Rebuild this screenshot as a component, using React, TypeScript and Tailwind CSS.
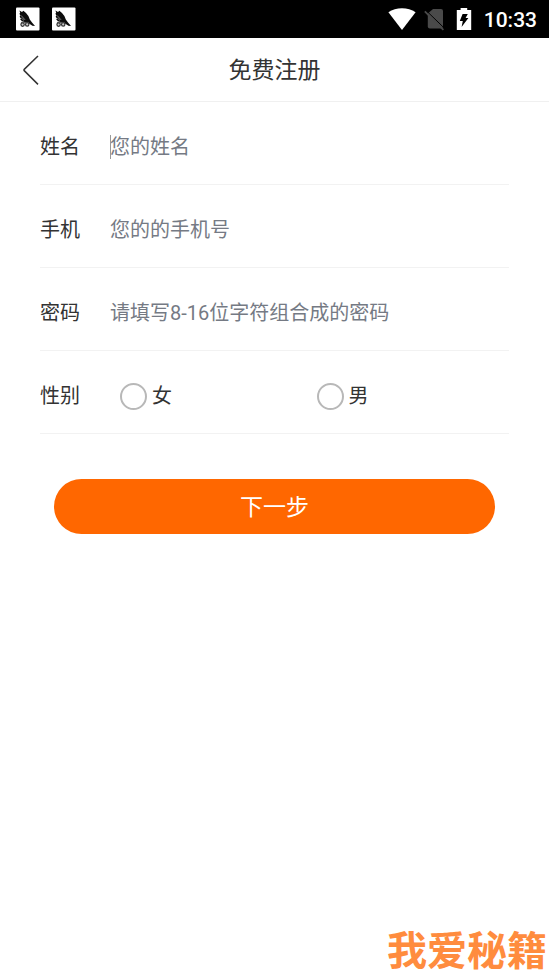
import { useState } from "react";
import type { ReactNode } from "react";

function AppBadge() {
  return (
    <svg viewBox="0 0 24 24" className="size-6" aria-hidden="true">
      <rect x="0" y="0.5" width="23.5" height="23" rx="1" fill="#fff" />
      <path
        d="M3.4 3.4 L6 5 L7.4 3.8 L10 6 L12.4 9 L13.8 12.4 L16 15.4 L19 19 L16.4 18.8 L13 16.6 L9.4 15.2 L6 14.2 L4.2 12.6 L5 11.4 L3.6 9.8 L4.4 8.6 L3.4 6.8 L4.2 5.8 Z"
        fill="#0c0c0c"
      />
      <path d="M5 8.4 L9 12.8 M5.2 11 L8 13.4" stroke="#aaa" strokeWidth="0.7" />
      <circle cx="6.6" cy="17.6" r="1.7" fill="#ccc" stroke="#333" strokeWidth="1.2" />
      <circle cx="11.2" cy="17.4" r="1.7" fill="#ccc" stroke="#333" strokeWidth="1.2" />
      <path d="M5 15.4 H13" stroke="#444" strokeWidth="0.9" />
    </svg>
  );
}

function StatusBar() {
  return (
    <div className="flex h-[38px] items-center justify-between bg-black pl-4 pr-3 text-white">
      <div className="flex gap-3">
        <AppBadge />
        <AppBadge />
      </div>
      <div className="flex items-center">
        <svg viewBox="0 0 28 24" className="h-6 w-7" aria-hidden="true">
          <path d="M14 23 L0.4 5.2 C4.2 2.6 9 1.2 14 1.2 C19 1.2 23.8 2.6 27.6 5.2 Z" fill="#fff" />
        </svg>
        <svg viewBox="0 0 22 24" className="ml-2 h-6 w-[22px]" aria-hidden="true">
          <path d="M9 2 H17 Q19 2 19 4 V19.6 Q19 21.6 17 21.6 H5.8 Q3.8 21.6 3.8 19.6 V6.6 Z" fill="#4a4a4a" />
          <path d="M2.4 3.8 L20.8 21.6" stroke="#000" strokeWidth="1" />
          <path d="M0.8 4.4 L19.4 22.8" stroke="#4a4a4a" strokeWidth="1.8" />
        </svg>
        <svg viewBox="0 0 16 24" className="ml-[10px] h-6 w-4" aria-hidden="true">
          <path d="M4.6 1 H11.2 V3 H15.2 V23 H0.8 V3 H4.6 Z" fill="#fff" />
          <path d="M6.6 7 H11.8 L9.6 11 H12.4 L5.6 20 L6.8 14 H3.8 Z" fill="#000" />
        </svg>
        <span className="ml-3 pt-0.5 font-['Roboto',sans-serif] text-[21px] leading-6 font-medium">10:33</span>
      </div>
    </div>
  );
}

function Row({ label, htmlFor, children }: { label: string; htmlFor?: string; children: ReactNode }) {
  return (
    <div className="flex h-[83px] items-center border-b border-[#f2f2f2] pt-2">
      {htmlFor ? (
        <label htmlFor={htmlFor} className="w-[70px] shrink-0">
          {label}
        </label>
      ) : (
        <span id="gender-label" className="w-[70px] shrink-0">
          {label}
        </span>
      )}
      {children}
    </div>
  );
}

const inputClass = "w-full min-w-0 bg-transparent outline-none placeholder:text-[#757a84]";

const genders = [
  { value: "female", label: "女" },
  { value: "male", label: "男" },
];

export default function RegisterPage() {
  const [name, setName] = useState("");
  const [phone, setPhone] = useState("");
  const [password, setPassword] = useState("");
  const [gender, setGender] = useState("");

  return (
    <div className="relative min-h-screen bg-white font-['Roboto','Noto_Sans_CJK_SC',sans-serif] text-xl text-[#333]">
      <StatusBar />

      <header className="grid h-16 grid-cols-[1fr_auto_1fr] items-center border-b border-[#f0f0f0] px-5">
        <button type="button" aria-label="返回" className="justify-self-start">
          <svg viewBox="0 0 20 32" className="h-8 w-5" fill="none" stroke="#333" strokeWidth="1.5" aria-hidden="true">
            <path d="M18 2 L4.2 15.4 Q3.6 16 4.2 16.6 L18 30.4" />
          </svg>
        </button>
        <h1 className="pt-0.5 text-[23px] leading-8 font-normal">免费注册</h1>
      </header>

      <form className="px-10" onSubmit={(e) => e.preventDefault()}>
        <Row label="姓名" htmlFor="name">
          <div className="relative flex-1">
            <input
              id="name"
              className={inputClass}
              placeholder="您的姓名"
              value={name}
              onChange={(e) => setName(e.target.value)}
            />
            {!name && <span className="absolute top-0.5 left-0 h-6 w-px bg-[#999]" />}
          </div>
        </Row>
        <Row label="手机" htmlFor="phone">
          <input
            id="phone"
            type="tel"
            className={inputClass}
            placeholder="您的的手机号"
            value={phone}
            onChange={(e) => setPhone(e.target.value)}
          />
        </Row>
        <Row label="密码" htmlFor="password">
          <input
            id="password"
            type="password"
            className={inputClass}
            placeholder="请填写8-16位字符组合成的密码"
            value={password}
            onChange={(e) => setPassword(e.target.value)}
          />
        </Row>
        <Row label="性别">
          <div role="radiogroup" aria-labelledby="gender-label" className="flex flex-1 pr-1.5">
            {genders.map((g) => (
              <label key={g.value} className="flex flex-1 items-center gap-[5px] pl-[10px]">
                <input
                  type="radio"
                  name="gender"
                  value={g.value}
                  checked={gender === g.value}
                  onChange={() => setGender(g.value)}
                  className="size-[27px] appearance-none rounded-full border-2 border-[#b8b8b8] checked:border-8 checked:border-[#ff6700]"
                />
                {g.label}
              </label>
            ))}
          </div>
        </Row>

        <div className="px-[14px] pt-[45px]">
          <button type="submit" className="h-[55px] w-full rounded-full bg-[#ff6700] pt-1 text-[23px] text-white">
            下一步
          </button>
        </div>
      </form>

      <p className="absolute right-0.5 bottom-0 text-[40px] leading-12 font-bold text-[#ff8c3e]">我爱秘籍</p>
    </div>
  );
}
